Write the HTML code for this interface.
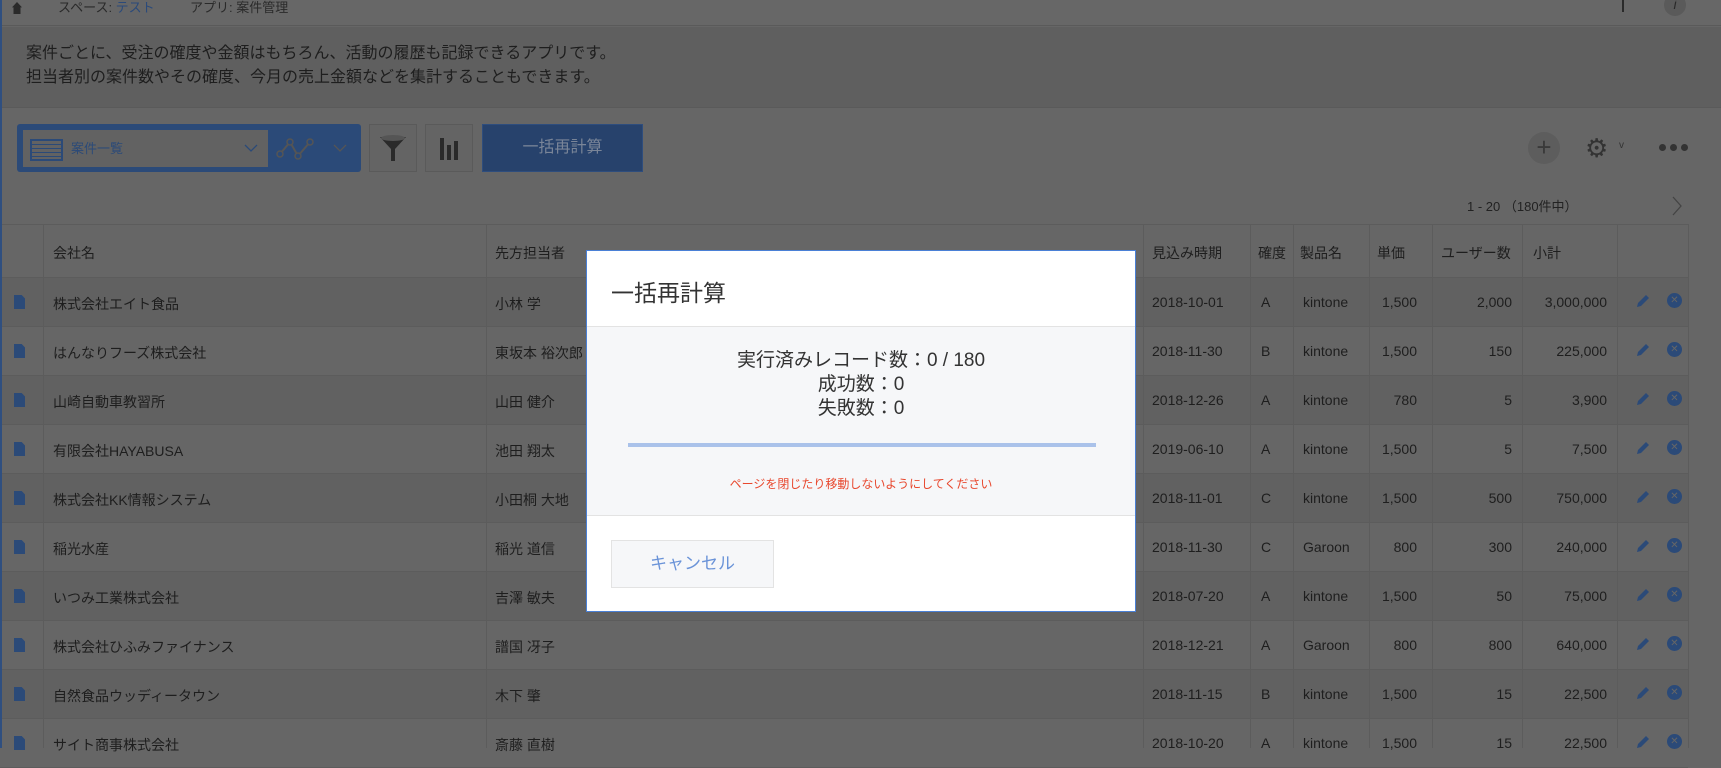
<!DOCTYPE html>
<html><head><meta charset="utf-8"><style>
*{box-sizing:border-box;margin:0;padding:0}
body{width:1721px;height:748px;overflow:hidden;background:#666;font-family:"Liberation Sans","Noto Sans CJK JP",sans-serif;color:#1e1e1e;position:relative}
.a{position:absolute;white-space:nowrap}
.row{position:absolute;left:0;width:1688px;height:49px;border-bottom:1px solid #5c5c5c;font-size:14px}
.row .a{top:16px}
.r{text-align:right}
.vl{position:absolute;top:224px;width:1px;height:524px;background:#5c5c5c}
</style></head><body>
<!-- breadcrumb -->
<div class="a" style="left:0;top:0;width:1721px;height:26px;background:#676767;border-bottom:1px solid #5a5a5a"></div>
<div class="a" style="left:12px;top:2px;width:10px;height:12px;background:#2a2a2a;clip-path:polygon(50% 0,100% 45%,85% 45%,85% 100%,15% 100%,15% 45%,0 45%)"></div>
<div class="a" style="left:58px;top:-3px;font-size:13px;color:#2a2a2a">スペース: <span style="color:#2b4a7a">テスト</span></div>
<div class="a" style="left:190px;top:-3px;font-size:13px;color:#2a2a2a">アプリ: 案件管理</div>
<div class="a" style="left:1622px;top:0;width:2px;height:12px;background:#2a2a2a"></div>
<div class="a" style="left:1664px;top:-6px;width:22px;height:22px;border-radius:50%;background:#5a5a5a;color:#2a2a2a;font-size:14px;text-align:center;font-style:italic;line-height:20px">i</div>
<!-- description -->
<div class="a" style="left:0;top:27px;width:1721px;height:81px;background:#5f5f5f;border-bottom:1px solid #5a5a5a"></div>
<div class="a" style="left:26px;top:42px;font-size:16px;line-height:24px;color:#1e1e1e">案件ごとに、受注の確度や金額はもちろん、活動の履歴も記録できるアプリです。<br>担当者別の案件数やその確度、今月の売上金額などを集計することもできます。</div>
<!-- toolbar -->
<div class="a" style="left:17px;top:124px;width:344px;height:48px;background:#2b4a78;border-radius:3px"></div>
<div class="a" style="left:23px;top:130px;width:245px;height:37px;background:#626262"></div>
<div class="a" style="left:30px;top:139px;width:33px;height:22px;border:2px solid #2b4a78;background:repeating-linear-gradient(#626262 0 3px,#2b4a78 3px 4px)"></div>
<div class="a" style="left:71px;top:138px;font-size:13px;color:#2b4a78">案件一覧</div>
<svg class="a" style="left:244px;top:143px" width="14" height="10"><polyline points="1,2 7,8 13,2" fill="none" stroke="#2b4a78" stroke-width="1.3"/></svg>
<svg class="a" style="left:276px;top:134px" width="40" height="30"><polyline points="4,20 14,8 22,22 34,8" fill="none" stroke="#555" stroke-width="2"/><circle cx="4" cy="20" r="3" fill="#2b4a78" stroke="#555" stroke-width="1.5"/><circle cx="14" cy="8" r="3" fill="#2b4a78" stroke="#555" stroke-width="1.5"/><circle cx="22" cy="22" r="3" fill="#2b4a78" stroke="#555" stroke-width="1.5"/><circle cx="34" cy="8" r="3" fill="#2b4a78" stroke="#555" stroke-width="1.5"/></svg>
<svg class="a" style="left:333px;top:143px" width="14" height="10"><polyline points="1,2 7,8 13,2" fill="none" stroke="#555" stroke-width="1.3"/></svg>
<div class="a" style="left:369px;top:124px;width:48px;height:48px;border:1px solid #5a5a5a;background:#646464"></div>
<svg class="a" style="left:378px;top:133px" width="30" height="32"><path d="M2 4 H28 L17 16 V28 H13 V16 Z" fill="#2a2a2a"/><ellipse cx="15" cy="5" rx="12" ry="3" fill="#555"/></svg>
<div class="a" style="left:425px;top:124px;width:48px;height:48px;border:1px solid #5a5a5a;background:#646464"></div>
<div class="a" style="left:440px;top:138px;width:4px;height:22px;background:#2a2a2a"></div>
<div class="a" style="left:447px;top:145px;width:4px;height:15px;background:#2a2a2a"></div>
<div class="a" style="left:454px;top:141px;width:4px;height:19px;background:#2a2a2a"></div>
<div class="a" style="left:482px;top:124px;width:161px;height:48px;background:#27426c;border:1px solid #2e4d7d;color:#7a8598;font-size:16px;text-align:center;line-height:46px">一括再計算</div>
<div class="a" style="left:1528px;top:132px;width:32px;height:32px;border-radius:50%;background:#5d5d5d;color:#3a3a3a;font-size:26px;text-align:center;line-height:30px">+</div>
<div class="a" style="left:1585px;top:133px;font-size:26px;color:#333;line-height:30px">⚙</div>
<div class="a" style="left:1619px;top:140px;font-size:10px;color:#333">v</div>
<div class="a" style="left:1659px;top:144px;width:7px;height:7px;border-radius:50%;background:#333"></div>
<div class="a" style="left:1670px;top:144px;width:7px;height:7px;border-radius:50%;background:#333"></div>
<div class="a" style="left:1681px;top:144px;width:7px;height:7px;border-radius:50%;background:#333"></div>
<div class="a" style="left:1467px;top:196px;font-size:13px;color:#222">1 - 20 （180件中）</div>
<svg class="a" style="left:1670px;top:195px" width="14" height="22"><polyline points="3,2 11,11 3,20" fill="none" stroke="#444" stroke-width="1.3"/></svg>
<!-- table -->
<div class="a" style="left:0;top:224px;width:1688px;height:54px;border-top:1px solid #5c5c5c;border-bottom:1px solid #5c5c5c;font-size:14px">
<div class="a" style="left:53px;top:18px">会社名</div><div class="a" style="left:495px;top:18px">先方担当者</div><div class="a" style="left:1152px;top:18px">見込み時期</div><div class="a" style="left:1258px;top:18px">確度</div><div class="a" style="left:1300px;top:18px">製品名</div><div class="a" style="left:1377px;top:18px">単価</div><div class="a" style="left:1441px;top:18px">ユーザー数</div><div class="a" style="left:1533px;top:18px">小計</div></div>
<div id="rows"></div>
<div class="vl" style="left:43px"></div><div class="vl" style="left:486px"></div><div class="vl" style="left:1143px"></div><div class="vl" style="left:1250px"></div><div class="vl" style="left:1293px"></div><div class="vl" style="left:1369px"></div><div class="vl" style="left:1432px"></div><div class="vl" style="left:1522px"></div><div class="vl" style="left:1617px"></div><div class="vl" style="left:1688px"></div>
<div class="a" style="left:0;top:0;width:2px;height:748px;background:#2f4f80"></div>
<script>
const d=[["株式会社エイト食品","小林 学","2018-10-01","A","kintone","1,500","2,000","3,000,000"],["はんなりフーズ株式会社","東坂本 裕次郎","2018-11-30","B","kintone","1,500","150","225,000"],["山崎自動車教習所","山田 健介","2018-12-26","A","kintone","780","5","3,900"],["有限会社HAYABUSA","池田 翔太","2019-06-10","A","kintone","1,500","5","7,500"],["株式会社KK情報システム","小田桐 大地","2018-11-01","C","kintone","1,500","500","750,000"],["稲光水産","稲光 道信","2018-11-30","C","Garoon","800","300","240,000"],["いつみ工業株式会社","吉澤 敏夫","2018-07-20","A","kintone","1,500","50","75,000"],["株式会社ひふみファイナンス","譜国 冴子","2018-12-21","A","Garoon","800","800","640,000"],["自然食品ウッディータウン","木下 肇","2018-11-15","B","kintone","1,500","15","22,500"],["サイト商事株式会社","斎藤 直樹","2018-10-20","A","kintone","1,500","15","22,500"]];
let h="";d.forEach((r,i)=>{const t=278+i*49;h+=`<div class="row" style="top:${t}px;background:${i%2?'#666':'#616161'}">
<div class="a" style="left:14px;top:17px;width:11px;height:14px;background:#2b4a78;clip-path:polygon(0 0,70% 0,100% 25%,100% 100%,0 100%)"></div>
<div class="a" style="left:53px">${r[0]}</div><div class="a" style="left:495px">${r[1]}</div><div class="a" style="left:1152px">${r[2]}</div><div class="a" style="left:1261px">${r[3]}</div><div class="a" style="left:1303px">${r[4]}</div>
<div class="a r" style="right:271px">${r[5]}</div><div class="a r" style="right:176px">${r[6]}</div><div class="a r" style="right:81px">${r[7]}</div>
<svg class="a" style="left:1635px;top:15px" width="16" height="16"><path d="M2 14 L3 10 L11 2 L14 5 L6 13 Z" fill="#2b4a78"/></svg>
<div class="a" style="left:1667px;top:15px;width:15px;height:15px;border-radius:50%;background:#2b4a78;color:#666;font-size:10px;text-align:center;line-height:15px">✕</div></div>`});
document.getElementById("rows").innerHTML=h;
</script>
<!-- modal -->
<div class="a" style="left:586px;top:250px;width:550px;height:362px;background:#fff;border:1px solid #4a80d6">
<div class="a" style="left:24px;top:23px;font-size:23px;color:#333">一括再計算</div>
<div class="a" style="left:0;top:75px;width:548px;height:190px;background:#f6f7f9;border-top:1px solid #e3e3e3;border-bottom:1px solid #e3e3e3">
<div class="a" style="left:0;top:22px;width:548px;text-align:center;font-size:19px;line-height:24px;color:#333">実行済みレコード数：0 / 180<br>成功数：0<br>失敗数：0</div>
<div class="a" style="left:41px;top:116px;width:468px;height:4px;background:#aac2ea"></div>
<div class="a" style="left:0;top:148px;width:548px;text-align:center;font-size:12px;color:#e8482e">ページを閉じたり移動しないようにしてください</div>
</div>
<div class="a" style="left:24px;top:289px;width:163px;height:48px;background:#f6f7f9;border:1px solid #e3e3e3;text-align:center;line-height:46px;font-size:17px;color:#6a93d8">キャンセル</div>
</div>
</body></html>
